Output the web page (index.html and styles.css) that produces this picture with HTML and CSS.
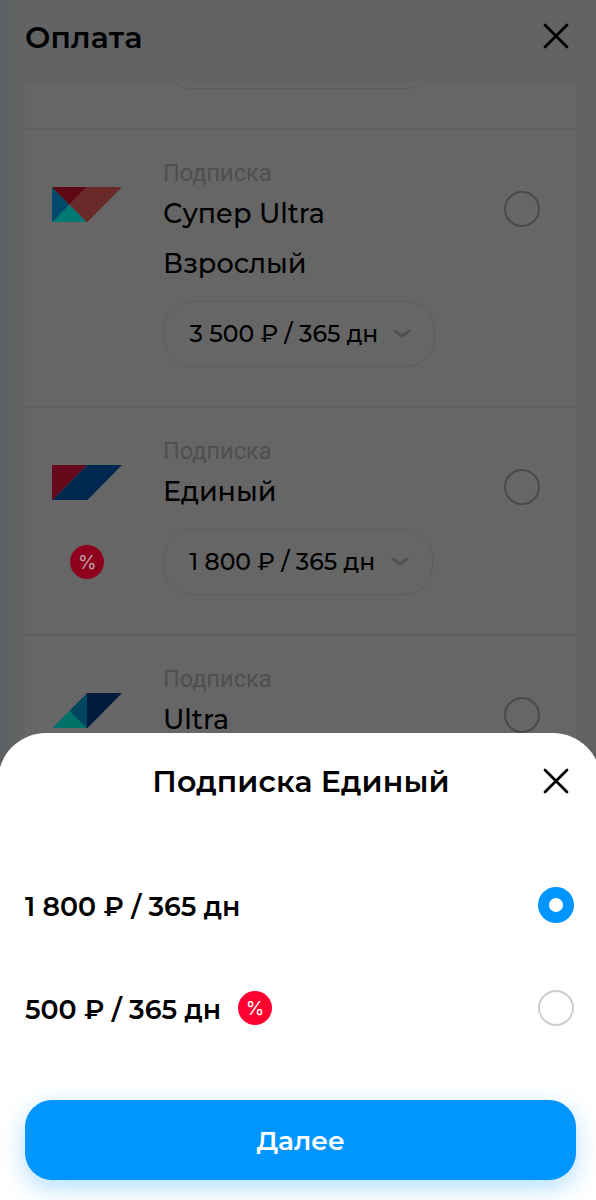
FILE: index.html
```
<!DOCTYPE html>
<html lang="ru">
<head>
<meta charset="utf-8">
<title>Оплата</title>
<link rel="stylesheet" href="styles.css">
</head>
<body>
<main class="page">
  <header class="header">
    <h1 class="header-title">Оплата</h1>
    <svg class="close" viewBox="0 0 26 26"><path d="M2 2 24 24M24 2 2 24"/></svg>
  </header>
  <section class="list">
    <div class="stub"><div class="stub-pill"></div></div>
    <article class="item tall">
      <div class="brand">
        <svg class="logo" viewBox="0 0 70 35" preserveAspectRatio="none"><path fill="#004a6c" d="M0 0 17.5 17.5 0 35z"/><path fill="#007a74" d="M0 35 17.5 17.5 35 35z"/><path fill="#5f0712" d="M0 0H35L17.5 17.5z"/><path fill="#6b2a2a" d="M35 0H70L35 35 17.5 17.5z"/></svg>
      </div>
      <div class="info">
        <div class="label">Подписка</div>
        <div class="name">Супер Ultra<br>Взрослый</div>
        <div class="pill pill-a"><span class="price">3 500 ₽ / 365 дн</span><svg class="chevron" viewBox="0 0 18 10"><path d="M2 2.2 9 7 16 2.2"/></svg></div>
      </div>
      <span class="radio dim"></span>
    </article>
    <article class="item">
      <div class="brand">
        <svg class="logo" viewBox="0 0 70 35" preserveAspectRatio="none"><path fill="#66091a" d="M0 0H35L0 35z"/><path fill="#002850" d="M35 0H70L35 35H0z"/></svg>
        <span class="badge dark">%</span>
      </div>
      <div class="info">
        <div class="label">Подписка</div>
        <div class="name">Единый</div>
        <div class="pill pill-b"><span class="price">1 800 ₽ / 365 дн</span><svg class="chevron" viewBox="0 0 18 10"><path d="M2 2.2 9 7 16 2.2"/></svg></div>
      </div>
      <span class="radio dim"></span>
    </article>
    <article class="item">
      <div class="brand">
        <svg class="logo" viewBox="0 0 70 35" preserveAspectRatio="none"><path fill="#007268" d="M0 35 17.5 17.5 35 35z"/><path fill="#004660" d="M17.5 17.5 35 0V35z"/><path fill="#001b3d" d="M35 0H70L35 35z"/></svg>
      </div>
      <div class="info">
        <div class="label">Подписка</div>
        <div class="name">Ultra</div>
      </div>
      <span class="radio dim"></span>
    </article>
  </section>
</main>
<div class="overlay">
  <section class="sheet">
    <div class="sheet-head">
      <h2 class="sheet-title">Подписка Единый</h2>
      <svg class="close" viewBox="0 0 26 26"><path d="M2 2 24 24M24 2 2 24"/></svg>
    </div>
    <div class="option"><span class="option-text">1 800 ₽ / 365 дн</span><span class="radio checked"></span></div>
    <div class="option"><span class="option-text">500 ₽ / 365 дн</span><span class="badge">%</span><span class="radio"></span></div>
    <button class="next">Далее</button>
  </section>
</div>
</body>
</html>
```
FILE: styles.css
```
* { box-sizing: border-box; }
body {
  margin: 0;
  width: 596px;
  height: 1200px;
  position: relative;
  overflow: hidden;
  font-family: Montserrat, Inter, "Open Sans", sans-serif;
  color: #000;
}
.page {
  height: 1200px;
  overflow: hidden;
  background: linear-gradient(90deg, #5e6163, #616364 25px, #616364 570px, #5f6163);
}
.header {
  height: 83px;
  padding: 0 27px 0 25px;
  display: flex;
  justify-content: space-between;
}
.header-title {
  margin: 19px 0 0;
  font-size: 30px;
  line-height: 38px;
  font-weight: 600;
  letter-spacing: .15px;
}
.close {
  width: 26px;
  height: 26px;
  fill: none;
  stroke: #000;
  stroke-width: 2.8;
  stroke-linecap: round;
}
.header .close { margin-top: 23px; }
.list {
  margin: 0 19.6px 0 25px;
  background: #666;
}
.stub {
  height: 45px;
  overflow: hidden;
}
.stub-pill {
  width: 272px;
  height: 66px;
  margin: -60px 0 0 138px;
  border: 1.5px solid #5d5d5d;
  border-radius: 27px;
}
.item {
  height: 228px;
  padding-left: 27px;
  border-top: 2px solid #5e5e5e;
  display: flex;
}
.item.tall { height: 278px; }
.brand {
  width: 111px;
  padding-top: 56.5px;
}
.logo {
  display: block;
  width: 70px;
  height: 35.5px;
}
.badge {
  width: 34px;
  height: 34px;
  border-radius: 50%;
  background: #ff0030;
  color: #fff;
  font: 400 19px/35px Inter, sans-serif;
  text-align: center;
}
.badge.dark {
  display: block;
  margin: 45px 0 0 18.4px;
  background: #8f001c;
  color: #bba2a6;
}
.info {
  width: 341px;
  padding-top: 29px;
}
.label {
  font: 400 23.5px/28px Roboto, sans-serif;
  color: #4f4f4f;
}
.name {
  padding-top: 2px;
  font-size: 27px;
  line-height: 50px;
  font-weight: 500;
}
.pill {
  height: 66px;
  margin-top: 12px;
  padding: 0 23px 1px 25.5px;
  border: 1.5px solid #5d5d5d;
  border-radius: 29px;
  display: flex;
  align-items: center;
  justify-content: space-between;
}
.pill-a { width: 272px; }
.pill-b { width: 269.5px; }
.price {
  font-size: 23.5px;
  font-weight: 500;
  white-space: nowrap;
}
.chevron {
  width: 18px;
  height: 10px;
  margin-top: 1px;
  fill: none;
  stroke: #505050;
  stroke-width: 3;
  stroke-linecap: round;
}
.radio {
  width: 36px;
  height: 36px;
  flex: none;
  border: 2.5px solid #ccc;
  border-radius: 50%;
}
.radio.dim {
  margin-top: 61px;
  border: 2px solid #4a4a4a;
}
.radio.checked { border: 11.5px solid #0095ff; }
.overlay {
  position: absolute;
  inset: 0;
  overflow: hidden;
  display: flex;
  flex-direction: column;
  justify-content: flex-end;
}
.sheet {
  height: 467px;
  margin: 0 -5px 0 -2px;
  padding: 0 25px 0 27px;
  border-radius: 48px 48px 0 0;
  background: #fff;
}
.sheet-head {
  height: 120px;
  padding-right: 7px;
  display: flex;
}
.sheet-title {
  flex: 1;
  margin: 30px 0 0;
  padding-left: 34px;
  text-align: center;
  font-size: 30px;
  line-height: 38px;
  font-weight: 600;
  letter-spacing: .1px;
  white-space: nowrap;
}
.sheet-head .close { margin-top: 34.5px; }
.option {
  height: 103.5px;
  padding-right: 2px;
  display: flex;
  align-items: center;
  font-size: 26.75px;
  font-weight: 600;
}
.option-text { padding-top: 3px; }
.option .radio { margin-left: auto; }
.option .badge { margin-left: 17px; }
.next {
  display: block;
  width: 551.4px;
  height: 80px;
  margin: 40px 0 0;
  border: 0;
  border-radius: 27px;
  background: #0095ff;
  box-shadow: 0 8px 24px rgba(0, 149, 255, .3);
  color: #fff;
  font: 600 26.5px/80px Montserrat, Inter, sans-serif;
}
```
